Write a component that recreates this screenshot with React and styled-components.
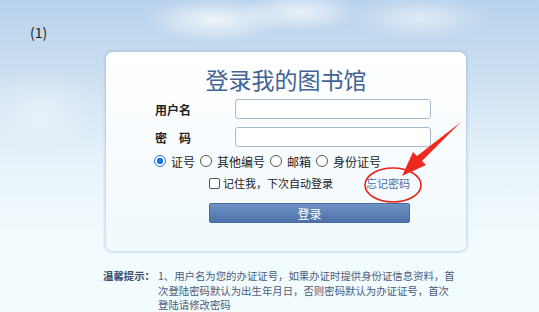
import styled, { createGlobalStyle } from 'styled-components';

const GlobalStyle = createGlobalStyle`
  html, body {
    margin: 0;
    padding: 0;
  }
  body {
    font-family: "Noto Sans CJK SC", "Noto Sans", sans-serif;
  }
`;

const idTypes = ['证号', '其他编号', '邮箱', '身份证号'];

const App = () => {
  return (
    <>
      <GlobalStyle />
      <Page>
        <Index>(1)</Index>
        <Card>
          <Title>登录我的图书馆</Title>
          <FormGrid>
            <Label>用户名</Label>
            <Input type="text" />
            <Label>密&emsp;码</Label>
            <Input type="password" />
          </FormGrid>
          <RadioRow>
            {idTypes.map((name, i) => (
              <RadioItem key={name}>
                <Radio checked={i === 0} />
                {name}
              </RadioItem>
            ))}
          </RadioRow>
          <RememberRow>
            <Remember>
              <Box />
              记住我，下次自动登录
            </Remember>
            <Forgot>忘记密码</Forgot>
          </RememberRow>
          <LoginButton>登录</LoginButton>
        </Card>
        <Tips>
          <TipsTitle>温馨提示：</TipsTitle>
          <TipsText>
            1、用户名为您的办证证号，如果办证时提供身份证信息资料，首次登陆密码默认为出生年月日，否则密码默认为办证证号，首次登陆请修改密码
          </TipsText>
        </Tips>
        <Marker width="539" height="312" viewBox="0 0 539 312">
          <ellipse cx="393" cy="185" rx="28" ry="17" fill="none" stroke="#e8231c" strokeWidth="1.6" />
          <path d="M461 122 L422 161 L426 165 L402 176 L413 152 L417 156 Z" fill="#ee2a1f" />
        </Marker>
      </Page>
    </>
  );
};

export default App;

const Page = styled.div`
  position: relative;
  width: 539px;
  height: 312px;
  overflow: hidden;
  background:
    radial-gradient(ellipse 70px 22px at 215px 20px, rgba(255, 255, 255, 0.75), rgba(255, 255, 255, 0) 100%),
    radial-gradient(ellipse 60px 20px at 300px 12px, rgba(255, 255, 255, 0.7), rgba(255, 255, 255, 0) 100%),
    radial-gradient(ellipse 70px 22px at 420px 18px, rgba(255, 255, 255, 0.5), rgba(255, 255, 255, 0) 100%),
    radial-gradient(ellipse 60px 40px at 40px 110px, rgba(255, 255, 255, 0.4), rgba(255, 255, 255, 0) 100%),
    linear-gradient(180deg, #b8d2ec 0%, #cde0f2 25%, #e6f2fa 50%, #f2fbfd 75%, #f3fcfd 100%);
`;

const Index = styled.div`
  padding: 23px 0 0 30px;
  height: 29px;
  font-size: 14px;
  line-height: 18px;
  color: #222;
`;

const Card = styled.div`
  box-sizing: border-box;
  width: 360px;
  height: 199px;
  margin-left: 106px;
  padding: 12px 0 0;
  background: linear-gradient(180deg, #ffffff 0%, #f6fbfe 60%, #f1fafd 100%);
  border-radius: 7px;
  box-shadow: 0 0 3px 1px rgba(140, 170, 205, 0.55);
`;

const Title = styled.div`
  text-align: center;
  font-size: 23px;
  line-height: 30px;
  color: #416395;
`;

const FormGrid = styled.div`
  display: grid;
  grid-template-columns: 80px 196px;
  row-gap: 8px;
  align-items: center;
  padding-left: 49px;
  margin-top: 5px;
`;

const Label = styled.div`
  font-size: 12px;
  font-weight: bold;
  color: #222;
`;

const Input = styled.input`
  box-sizing: border-box;
  height: 20px;
  width: 196px;
  border: 1px solid #a9b9cf;
  border-radius: 3px;
  background: #fff;
  padding: 0 4px;
  outline: none;
`;

const RadioRow = styled.div`
  display: flex;
  gap: 5px;
  padding-left: 48px;
  margin-top: 6px;
  height: 16px;
  align-items: center;
`;

const RadioItem = styled.label`
  display: flex;
  align-items: center;
  gap: 5px;
  font-size: 12px;
  color: #222;
`;

const Radio = styled.span`
  box-sizing: border-box;
  width: 12px;
  height: 12px;
  border-radius: 50%;
  border: 1px solid ${({ checked }) => (checked ? '#1a73e8' : '#555')};
  background: ${({ checked }) => (checked ? 'radial-gradient(circle, #1a73e8 0 3px, #fff 3.5px)' : '#fff')};
`;

const RememberRow = styled.div`
  display: flex;
  align-items: center;
  padding-left: 103px;
  margin-top: 6px;
  height: 16px;
`;

const Remember = styled.label`
  display: flex;
  align-items: center;
  gap: 3px;
  font-size: 11px;
  color: #222;
  width: 157px;
`;

const Box = styled.span`
  box-sizing: border-box;
  width: 11px;
  height: 11px;
  border: 1px solid #555;
  border-radius: 2px;
  background: #fff;
`;

const Forgot = styled.a`
  font-size: 11px;
  color: #4c6ea3;
  cursor: pointer;
`;

const LoginButton = styled.button`
  display: block;
  box-sizing: border-box;
  width: 201px;
  height: 20px;
  margin: 12px 0 0 103px;
  border: 1px solid #4a6a9c;
  border-radius: 2px;
  background: linear-gradient(180deg, #6f91c4 0%, #4d71a9 100%);
  color: #fff;
  font-family: inherit;
  font-size: 12px;
  padding: 0;
`;

const Tips = styled.div`
  display: flex;
  margin: 18px 0 0 103px;
  width: 360px;
  font-size: 10.4px;
  line-height: 14.5px;
  color: #4a5b7c;
`;

const TipsTitle = styled.div`
  flex: none;
  width: 55px;
  font-weight: bold;
  color: #3b4e73;
`;

const TipsText = styled.div`
  width: 300px;
`;

const Marker = styled.svg`
  position: absolute;
  left: 0;
  top: 0;
  pointer-events: none;
`;
